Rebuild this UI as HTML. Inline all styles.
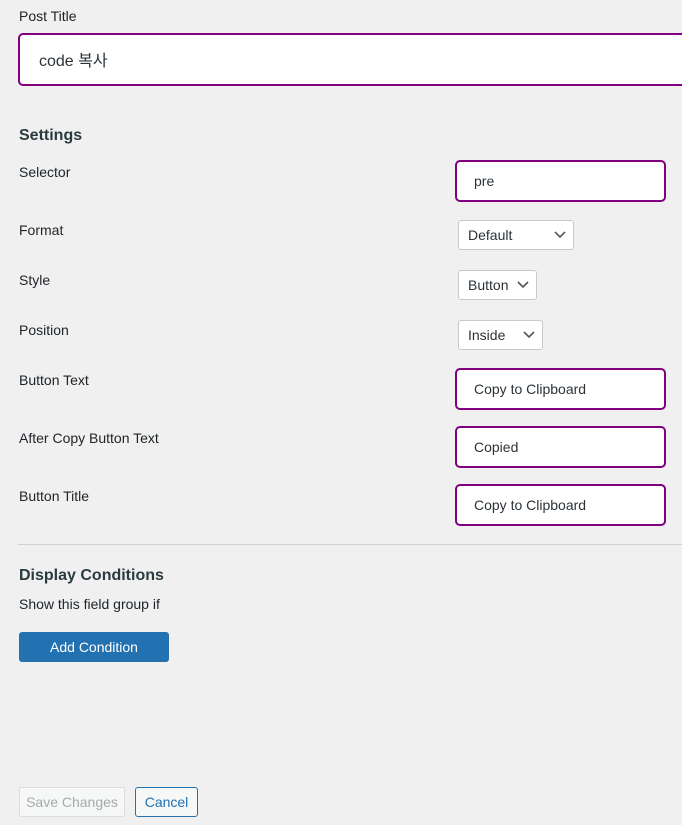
<!DOCTYPE html>
<html><head><meta charset="utf-8"><style>
*{box-sizing:border-box;margin:0;padding:0}
body{width:682px;height:825px;background:#f0f0f1;font-family:"Liberation Sans","Noto Sans CJK KR",sans-serif;color:#1d2327;position:relative;overflow:hidden;font-size:14px}
.a{position:absolute;white-space:nowrap}
.lbl{left:19px;font-size:14px;line-height:18px}
.inp{position:absolute;left:455px;width:211px;height:42px;background:#fff;border:2px solid #800080;border-radius:5px;padding-left:17px;line-height:38px;font-size:14px;color:#2c3338}
.sel{position:absolute;left:458px;height:30px;background:#fff;border:1px solid #c9c9c9;border-radius:3px;padding-left:9px;line-height:28px;font-size:14px;color:#2c3338}
.sel svg{position:absolute;right:7px;top:10px}
h2{position:absolute;left:19px;font-size:16px;font-weight:bold;color:#2a3b3d}
</style></head><body>
<div class="a lbl" style="top:7px">Post Title</div>
<div class="a" style="left:18px;top:33px;width:680px;height:53px;background:#fff;border:2px solid #800080;border-radius:5px;padding-left:19px;padding-top:2px;line-height:49px;font-size:16px;color:#2c3338">code 복사</div>
<h2 style="top:127px">Settings</h2>
<div class="a lbl" style="top:163px">Selector</div>
<div class="inp" style="top:160px">pre</div>
<div class="a lbl" style="top:221px">Format</div>
<div class="sel" style="top:220px;width:116px">Default<svg width="12" height="8"><path d="M1 1l5 5 5-5" stroke="#50575e" stroke-width="1.6" fill="none"/></svg></div>
<div class="a lbl" style="top:271px">Style</div>
<div class="sel" style="top:270px;width:79px">Button<svg width="12" height="8"><path d="M1 1l5 5 5-5" stroke="#50575e" stroke-width="1.6" fill="none"/></svg></div>
<div class="a lbl" style="top:321px">Position</div>
<div class="sel" style="top:320px;width:85px">Inside<svg width="12" height="8"><path d="M1 1l5 5 5-5" stroke="#50575e" stroke-width="1.6" fill="none"/></svg></div>
<div class="a lbl" style="top:371px">Button Text</div>
<div class="inp" style="top:368px">Copy to Clipboard</div>
<div class="a lbl" style="top:429px">After Copy Button Text</div>
<div class="inp" style="top:426px">Copied</div>
<div class="a lbl" style="top:487px">Button Title</div>
<div class="inp" style="top:484px">Copy to Clipboard</div>
<div class="a" style="left:18px;top:544px;width:664px;height:1px;background:#d0d0d0"></div>
<h2 style="top:567px">Display Conditions</h2>
<div class="a lbl" style="top:595px">Show this field group if</div>
<div class="a" style="left:19px;top:632px;width:150px;height:30px;background:#2271b1;border-radius:3px;color:#fff;text-align:center;line-height:30px;font-size:14px">Add Condition</div>
<div class="a" style="left:19px;top:787px;width:106px;height:30px;background:#f6f7f7;border:1px solid #dcdcde;border-radius:3px;color:#a7aaad;text-align:center;line-height:28px;font-size:14px">Save Changes</div>
<div class="a" style="left:135px;top:787px;width:63px;height:30px;background:#f6f7f7;border:1px solid #2271b1;border-radius:3px;color:#2271b1;text-align:center;line-height:28px;font-size:14px">Cancel</div>
</body></html>
